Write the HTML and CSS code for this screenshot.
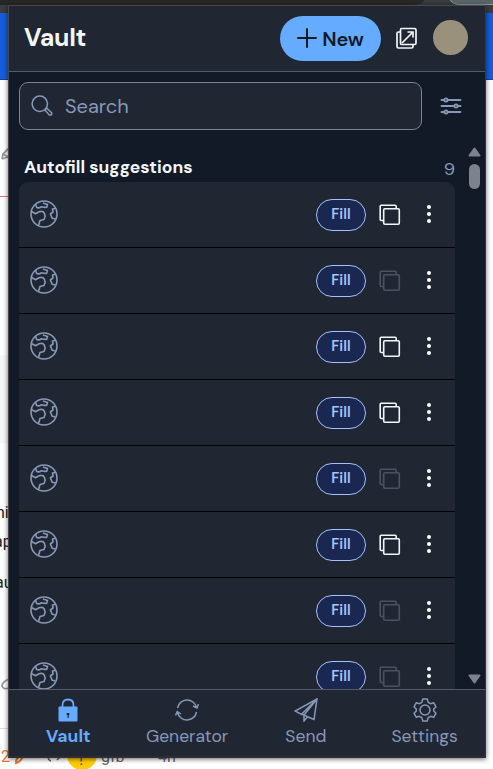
FILE: index.html
```html
<!DOCTYPE html>
<html lang="en">
<head>
<meta charset="utf-8">
<title>Vault</title>
<link rel="stylesheet" href="styles.css">
</head>
<body>
<svg class="defs" aria-hidden="true">
  <symbol id="globe" viewBox="0 0 28 28"><circle cx="14" cy="14" r="13"/><path d="M5.500 4l1.200 3.500q2 1 5-.8 3 1 5 .5l.8-2.700-4.500-1.500M1.500 11.500l4 2.200 3.500-2q4-1.200 5.300 1.500l.9 3-1.200 3.300-4 1-1.500 5M25.500 8.300l-3 .7.5 3-2.700 2 2 4.300 3 .8"/></symbol>
  <symbol id="copy" viewBox="0 0 22 22"><rect x="4.700" y="4.700" width="15.600" height="15.600" rx="1.200"/><path d="M4.500 16.500H2.200q-1 0-1-1V2.200q0-1 1-1H16q1.200 0 1.200 1.200v2"/></symbol>
</svg>
<div class="page">
  <div class="toolbar"><span class="addressbar"></span></div>
  <div class="strip"><span class="chip"></span></div>
  <div class="bluebar"></div>
  <svg class="peek" width="493" height="689" viewBox="0 80 493 689">
    <path d="M0 196.500h9" stroke="#e57373"/>
    <path d="M0 728.500h9" stroke="#ddd"/>
    <path d="M0 355h8v88H0z" fill="#f7f7f7"/>
    <path d="M2 159l1-5 6-6M2 159l6-2M3 154l5 3" fill="none" stroke="#999" stroke-width="1.800"/>
    <path d="M9 679q-7 3-7 7 1 4 7 2" fill="none" stroke="#999" stroke-width="1.800"/>
    <circle cx="82" cy="755" r="15" fill="#ffcc00"/>
    <path d="M16 763q0-7 7-7-2 6-7 7z" fill="none" stroke="#e8762d" stroke-width="2"/>
    <path d="M48 756q0 4 3 5M57 760l3-3" fill="none" stroke="#666" stroke-width="1.500"/>
    <g class="peek-text">
      <text x="-4" y="518">ni</text><text x="-6" y="547">ap</text><text x="-5" y="588">au</text>
      <text x="1" y="762" fill="#e8762d">2</text>
      <text x="101" y="762" fill="#666">gfb</text><text x="158" y="762" fill="#666">4h</text>
      <text x="79" y="765" fill="#555">!</text>
    </g>
  </svg>
</div>

<main class="popup">
  <header class="header">
    <h1>Vault</h1>
    <button class="new"><svg width="20" height="20"><path d="M10 1v18M1 10h18"/></svg><span>New</span></button>
    <svg class="popout" width="22" height="22" viewBox="0 0 22 22"><path d="M5.500 1.500h13q1.500 0 1.500 1.500v13q0 1.500-1.500 1.500h-13Q4.500 17.500 4.500 16V3q0-1.500 1-1.500zM4.500 5H2.500Q1 5 1 6.500v13Q1 21 2.500 21h13q1.500 0 1.500-1.500v-2M6 16L16.500 5.500M11.500 5h5.500v5.500"/></svg>
    <span class="avatar"></span>
  </header>

  <section class="body">
    <div class="searchrow">
      <div class="search">
        <svg width="22" height="22" viewBox="0 0 22 22"><circle cx="8.800" cy="8.800" r="7.700"/><path d="M14.200 14.500l1.500-1.500 4.600 4.500q1 1.200 0 2.200-1.200 1-2.200 0l-4.200-4.700z"/></svg>
        <span>Search</span>
      </div>
      <svg class="filter" width="22" height="18" viewBox="0 0 22 18"><path d="M1.500 3H4M8 3h12.500M1.500 9H14M18 9h2.500M1.500 15H4M8 15h12.500"/><circle cx="6" cy="3" r="1.600"/><circle cx="16" cy="9" r="1.600"/><circle cx="6" cy="15" r="1.600"/></svg>
    </div>
    <div class="scroll">
      <div class="content">
        <div class="title"><h2>Autofill suggestions</h2><span>9</span></div>
        <ul class="list">
          <li><svg class="globe"><use href="#globe"/></svg><button class="fill">Fill</button><svg class="copy"><use href="#copy"/></svg><span class="dots"><i></i><i></i><i></i></span></li>
          <li><svg class="globe"><use href="#globe"/></svg><button class="fill">Fill</button><svg class="copy off"><use href="#copy"/></svg><span class="dots"><i></i><i></i><i></i></span></li>
          <li><svg class="globe"><use href="#globe"/></svg><button class="fill">Fill</button><svg class="copy"><use href="#copy"/></svg><span class="dots"><i></i><i></i><i></i></span></li>
          <li><svg class="globe"><use href="#globe"/></svg><button class="fill">Fill</button><svg class="copy"><use href="#copy"/></svg><span class="dots"><i></i><i></i><i></i></span></li>
          <li><svg class="globe"><use href="#globe"/></svg><button class="fill">Fill</button><svg class="copy off"><use href="#copy"/></svg><span class="dots"><i></i><i></i><i></i></span></li>
          <li><svg class="globe"><use href="#globe"/></svg><button class="fill">Fill</button><svg class="copy"><use href="#copy"/></svg><span class="dots"><i></i><i></i><i></i></span></li>
          <li><svg class="globe"><use href="#globe"/></svg><button class="fill">Fill</button><svg class="copy off"><use href="#copy"/></svg><span class="dots"><i></i><i></i><i></i></span></li>
          <li><svg class="globe"><use href="#globe"/></svg><button class="fill">Fill</button><svg class="copy off"><use href="#copy"/></svg><span class="dots"><i></i><i></i><i></i></span></li>
        </ul>
      </div>
      <div class="scrollbar">
        <svg width="13" height="10"><path d="M6.500 1.500L11.500 8.500H1.500z"/></svg>
        <span class="thumb"></span>
        <svg class="down" width="13" height="10"><path d="M6.500 8.500L11.500 1.500H1.500z"/></svg>
      </div>
    </div>
  </section>

  <nav class="nav">
    <a class="active"><svg width="24" height="24" viewBox="0 0 24 24"><path class="solid" d="M3.500 8.500h17q1 0 1 1v13q0 1-1 1h-17q-1 0-1-1v-13q0-1 1-1z"/><path d="M6.500 9V7q0-5.500 5.500-5.500T17.500 7v2" stroke-width="1.800"/><path class="key" d="M10.700 15h2.600v2h-.6v3h-1.200v-3h-.8z"/></svg><span>Vault</span></a>
    <a><svg width="24" height="24" viewBox="0 0 24 24"><path d="M2.500 10A9.700 9.700 0 0 1 21.500 9.500M21.500 14A9.700 9.700 0 0 1 2.500 14.500M18 8l4 2 1.500-4M.5 17.500L2.300 13.500 6 16"/></svg><span>Generator</span></a>
    <a><svg width="24" height="24" viewBox="0 0 24 24"><path d="M23 1L1 13l6.500 3.300L23 1l-3 20.500-6.500-2.800L10 23v-6L23 1M7.500 16.300L10 17M10 17l3.500 1.700"/></svg><span>Send</span></a>
    <a><svg width="24" height="24" viewBox="0 0 24 24"><circle cx="12" cy="12" r="5"/><path d="M9.800 1h4.400l1 3.400 2.300 1.300 3.300-.9 2.200 4-2.300 2.200v2l2.300 2.200-2.200 4-3.300-.9-2.300 1.300-1 3.400H9.800l-1-3.400-2.300-1.300-3.300.9-2.200-4L3.300 13v-2L1 8.800l2.200-4 3.300.9 2.300-1.300z" stroke-linejoin="round"/></svg><span>Settings</span></a>
  </nav>
</main>
</body>
</html>
```
FILE: styles.css
```css
* { box-sizing: border-box; }
body { margin: 0; width: 493px; height: 769px; overflow: hidden; position: relative; background: #fff; font-family: "DM Sans", Inter, sans-serif; }
svg { display: block; flex: none; fill: none; }
button { font: inherit; margin: 0; padding: 0; }
.defs { position: absolute; width: 0; height: 0; }

.page { width: 493px; height: 769px; overflow: hidden; }
.toolbar { height: 5px; background: #3b3c3d; }
.addressbar { display: block; width: 424px; height: 5px; background: #282828; border-bottom-right-radius: 12px 5px; }
.strip { height: 8px; background: #3b3c3d; }
.chip { position: absolute; left: 448px; top: -16px; width: 60px; height: 21px; border: 1px solid #999; border-radius: 11px; background: #58666b; }
.bluebar { height: 67px; background: #175ddc; border-bottom: 1px solid #174391; }
.peek-text { font: 16px Roboto, sans-serif; fill: #222; }

.popup { position: absolute; left: 8px; top: 5px; width: 478px; height: 753px; display: flex; flex-direction: column; border: 1px solid #484848; border-right-color: #3b3735; border-bottom: 2px solid #302e2e; background: #202733; color: #f3f6f9; box-shadow: 0 1px 5px rgba(0,0,0,.6); }
.header { height: 66px; flex: none; border-bottom: 1px solid #535b69; display: flex; align-items: center; padding: 0 17px 1px 15px; }
h1 { margin: 0 auto 1px 0; font-size: 25px; font-weight: 700; letter-spacing: -.3px; }
.new { width: 101px; height: 45px; border: 0; border-radius: 23px; background: #65abff; color: #121a27; display: flex; align-items: center; justify-content: center; gap: 5px; font-size: 20px; font-weight: 600; letter-spacing: -.1px; }
.new span { padding-top: 2px; }
.new svg { stroke: #121a27; stroke-width: 2; stroke-linecap: round; }
.popout { margin: 0 15px; stroke: #f3f6f9; stroke-width: 1.7; }
.avatar { width: 35px; height: 35px; margin-bottom: 1px; border-radius: 50%; background: #9a917c; }

.body { flex: 1; min-height: 0; background: #121a27; display: flex; flex-direction: column; }
.searchrow { display: flex; align-items: center; gap: 18px; padding: 10px 10px 0; }
.search { width: 403px; height: 48px; border: 1px solid #7b8290; border-radius: 9px; background: #202733; display: flex; align-items: center; gap: 12px; padding-left: 11px; color: #8898b9; font-size: 20px; letter-spacing: 0; }
.search svg { stroke: #8898b9; stroke-width: 1.5; }
.filter { stroke: #8898b9; stroke-width: 1.8; stroke-linecap: round; }
.scroll { flex: 1; min-height: 0; display: flex; justify-content: space-between; overflow: hidden; }
.content { width: 446px; padding-left: 10px; }
.title { height: 52px; padding: 23px 0 0 5px; display: flex; justify-content: space-between; color: #8898b9; font-size: 18px; line-height: 32px; }
h2 { margin: 0; color: #f3f6f9; font-size: 17.5px; line-height: 28px; font-weight: 700; letter-spacing: 0; }
.list { list-style: none; margin: 0; padding: 0; border-radius: 9px 9px 0 0; overflow: hidden; }
.list li { height: 66px; border-bottom: 1px solid #020304; background: #202733; display: flex; align-items: center; padding: 0 24px 0 11px; }
.globe { width: 28px; height: 28px; margin: 0 auto 1px 0; stroke: #8898b9; stroke-width: 1.6; stroke-linejoin: round; }
.fill { width: 50px; height: 32px; border: 1px solid #a3c1ff; border-radius: 16px; background: #1a2750; color: #aac3fb; font-size: 14.6px; font-weight: 600; }
.copy { width: 22px; height: 22px; margin: 0 26px 0 13px; stroke: #f3f6f9; stroke-width: 1.6; }
.copy.off { stroke: #485260; }
.dots { width: 4px; display: grid; gap: 3px; margin-bottom: 1px; }
.dots i { width: 4px; height: 4px; border-radius: 50%; background: #fff; }
.scrollbar { width: 17px; display: flex; flex-direction: column; padding: 17px 0 5px; }
.scrollbar path { fill: #7e828d; stroke: #7e828d; stroke-linejoin: round; stroke-width: 2; }
.thumb { width: 11px; height: 25px; margin: 7px 0 0 1px; border-radius: 6px; background: #7e828d; }
.down { margin-top: auto; }

.nav { height: 67px; flex: none; border-top: 1px solid #535b69; display: grid; grid-template-columns: repeat(4, 1fr); padding-right: 1px; background: #202733; }
.nav a { display: flex; flex-direction: column; align-items: center; padding-top: 8px; gap: 1px; color: #8898b9; font-size: 17.5px; line-height: 26px; }
.nav svg { stroke: currentColor; stroke-width: 1.5; }
.nav .active { color: #65abff; font-weight: 700; }
.solid { fill: currentColor; stroke: none; }
.key { fill: #202733; stroke: none; }
```
